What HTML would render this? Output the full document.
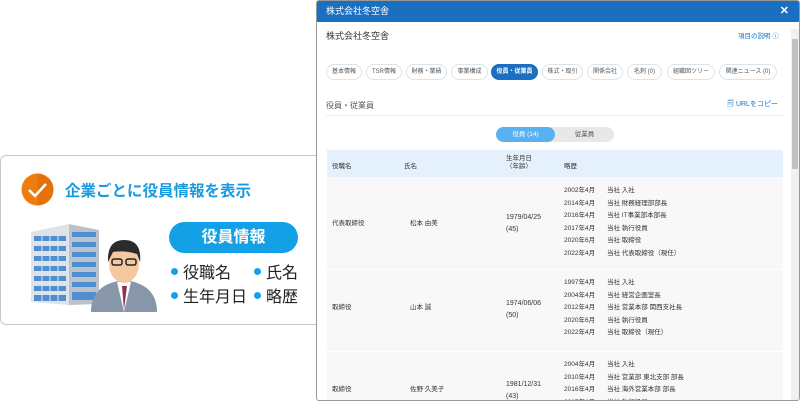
<!DOCTYPE html>
<html><head><meta charset="utf-8"><style>
*{margin:0;padding:0;box-sizing:border-box}
body{width:800px;height:403px;background:#fff;position:relative;overflow:hidden;font-family:"Liberation Sans","Noto Sans CJK JP",sans-serif;color:#333}
.card{position:absolute;left:0;top:155px;width:330px;height:170px;border:1px solid #c8c8c8;border-radius:6px;background:#fff}
.abs{position:absolute}
.modal{position:absolute;left:316px;top:0;width:484px;height:401px;border:1px solid #999;border-radius:3px;background:#fff;overflow:hidden}
.hd{height:21px;background:#1a6fc1;color:#fff;font-size:9px;line-height:21px;padding-left:9px}
.tab{position:absolute;top:63px;height:16px;border:1px solid #d8e4ee;border-radius:8px;font-size:6px;line-height:14px;text-align:center;color:#555}
.t{position:absolute;font-size:6.5px;color:#333;white-space:nowrap}
.d{display:inline-block;width:7px;height:7px;border-radius:50%;background:#14a0e6;margin-right:5px;vertical-align:middle;position:relative;top:-2px}
</style></head><body>
<div class="card">
 <svg class="abs" style="left:20px;top:17px" width="33" height="33" viewBox="0 0 33 33"><circle cx="16.5" cy="16.5" r="16" fill="#ee7d10"/><path d="M16.5 0.5A16 16 0 0 1 16.5 32.5Z" fill="#e06a05" opacity=".6"/><path d="M8 17l6 6 11-12" stroke="#fff" stroke-width="2.5" fill="none"/></svg>
 <div class="abs" style="left:64px;top:23px;font-size:15.5px;font-weight:bold;color:#1a9be0;white-space:nowrap">企業ごとに役員情報を表示</div>
 <svg class="abs" style="left:28px;top:66px" width="130" height="90" viewBox="0 0 130 90">
  <polygon points="2,10 40,2 40,83 2,80" fill="#dfe3e8"/><polygon points="40,2 70,8 70,82 40,83" fill="#b9c1cb"/>
  <g fill="#4d8fd0">
   <rect x="5" y="14" width="32" height="5"/><rect x="5" y="24" width="32" height="5"/><rect x="5" y="34" width="32" height="5"/><rect x="5" y="44" width="32" height="5"/><rect x="5" y="54" width="32" height="5"/><rect x="5" y="64" width="32" height="5"/><rect x="5" y="73" width="32" height="6"/>
   <rect x="43" y="10" width="24" height="5"/><rect x="43" y="20" width="24" height="5"/><rect x="43" y="30" width="24" height="5"/><rect x="43" y="40" width="24" height="5"/><rect x="43" y="50" width="24" height="5"/><rect x="43" y="60" width="24" height="5"/><rect x="43" y="70" width="24" height="8"/>
  </g>
  <g stroke="#dfe3e8" stroke-width="1"><path d="M13 10V80M21 8V80M29 6V82"/></g>
  <path d="M62 90 Q62 62 95 58 Q128 62 128 90Z" fill="#8796a8"/>
  <path d="M88 60 L95 90 L102 60Z" fill="#fff"/><path d="M93 64 L95 88 L98 64Z" fill="#8a3550"/>
  <ellipse cx="95" cy="42" rx="15" ry="19" fill="#f4c9a0"/>
  <path d="M79 40 Q78 18 95 18 Q113 18 111 40 L108 32 Q96 28 84 30Z" fill="#2b2b2b"/>
  <rect x="83" y="37" width="10" height="6" rx="2" fill="none" stroke="#222" stroke-width="1.5"/><rect x="97" y="37" width="10" height="6" rx="2" fill="none" stroke="#222" stroke-width="1.5"/>
 </svg>
 <div class="abs" style="left:168px;top:66px;width:129px;height:31px;border-radius:16px;background:#14a0e6;color:#fff;font-size:16px;font-weight:bold;text-align:center;line-height:31px">役員情報</div>
 <div class="abs" style="left:170px;top:106px;font-size:16px;line-height:24px;color:#222;white-space:nowrap"><span class="d"></span>役職名<br><span class="d"></span>生年月日</div>
 <div class="abs" style="left:253px;top:106px;font-size:16px;line-height:24px;color:#222;white-space:nowrap"><span class="d"></span>氏名<br><span class="d"></span>略歴</div>
</div>
<div class="modal">
 <div class="hd">株式会社冬空舎<span style="position:absolute;right:10px;top:0;font-weight:bold;font-size:11px">✕</span></div>
 <div class="abs" style="left:9px;top:28px;font-size:9px;color:#333">株式会社冬空舎</div>
 <div class="abs" style="left:421px;top:29px;font-size:6.5px;color:#1a6fc1">項目の説明 ⓘ</div>
 <div class="abs" style="right:0;top:28px;width:8px;height:373px;background:#f0f0f0"><div style="margin:10px 1px 0;height:130px;background:#c1c1c1"></div></div>
 <div class="tab" style="left:9px;width:36px">基本情報</div>
 <div class="tab" style="left:49px;width:36px">TSR情報</div>
 <div class="tab" style="left:89px;width:41px">財務・業績</div>
 <div class="tab" style="left:134px;width:37px">事業構成</div>
 <div class="tab" style="left:174px;width:47px;background:#1a6fc1;color:#fff;border-color:#1a6fc1;font-weight:bold">役員・従業員</div>
 <div class="tab" style="left:225px;width:41px">株式・取引</div>
 <div class="tab" style="left:270px;width:36px">関係会社</div>
 <div class="tab" style="left:310px;width:35px">名刺 (0)</div>
 <div class="tab" style="left:350px;width:48px">組織図ツリー</div>
 <div class="tab" style="left:402px;width:58px">関連ニュース (0)</div>
 <div class="abs" style="left:9px;top:99px;font-size:8px;color:#555">役員・従業員</div>
 <div class="abs" style="left:410px;top:98px;font-size:7px;color:#1a6fc1">🗐 URLをコピー</div>
 <div class="abs" style="left:9px;top:114px;width:458px;border-top:1px solid #eee"></div>
 <div class="abs" style="left:179px;top:126px;width:118px;height:15px;border-radius:8px;background:#e8e8e8"></div>
 <div class="abs" style="left:179px;top:126px;width:59px;height:15px;border-radius:8px;background:#59b1f2;color:#fff;font-size:6.5px;line-height:15px;text-align:center">役員 (14)</div>
 <div class="abs" style="left:238px;top:126px;width:59px;font-size:6.5px;line-height:15px;text-align:center;color:#555">従業員</div>
 <div class="abs" style="left:10px;top:149px;width:456px;height:27px;background:#e4f1fc"></div>
 <div class="abs" style="left:10px;top:176px;width:456px;height:225px;background:#f8f8f8"></div>
 <div class="abs" style="left:10px;top:268px;width:456px;border-top:1px solid #fff"></div>
 <div class="abs" style="left:10px;top:350px;width:456px;border-top:1px solid #fff"></div>
 <div class="t" style="left:15px;top:159px">役職名</div><div class="t" style="left:87px;top:159px">氏名</div>
 <div class="t" style="left:189px;top:154px;text-align:center;line-height:8px">生年月日<br>（年齢）</div><div class="t" style="left:247px;top:159px">略歴</div>
 <div class="t" style="left:15px;top:216px">代表取締役</div><div class="t" style="left:93px;top:216px">松本 由美</div>
 <div class="t" style="left:189px;top:211px;line-height:12px;font-size:7px">1979/04/25<br>(45)</div>
 <div class="t" style="left:247px;top:184px;line-height:12.5px">2002年4月<br>2014年4月<br>2016年4月<br>2017年4月<br>2020年6月<br>2022年4月</div>
 <div class="t" style="left:290px;top:184px;line-height:12.5px">当社 入社<br>当社 財務経理部部長<br>当社 IT事業部本部長<br>当社 執行役員<br>当社 取締役<br>当社 代表取締役（現任）</div>
 <div class="t" style="left:15px;top:300px">取締役</div><div class="t" style="left:93px;top:300px">山本 誠</div>
 <div class="t" style="left:189px;top:297px;line-height:12px;font-size:7px">1974/06/06<br>(50)</div>
 <div class="t" style="left:247px;top:276px;line-height:12.5px">1997年4月<br>2004年4月<br>2012年4月<br>2020年6月<br>2022年4月</div>
 <div class="t" style="left:290px;top:276px;line-height:12.5px">当社 入社<br>当社 経営企画室長<br>当社 営業本部 関西支社長<br>当社 執行役員<br>当社 取締役（現任）</div>
 <div class="t" style="left:15px;top:382px">取締役</div><div class="t" style="left:93px;top:382px">佐野 久美子</div>
 <div class="t" style="left:189px;top:378px;line-height:12px;font-size:7px">1981/12/31<br>(43)</div>
 <div class="t" style="left:247px;top:358px;line-height:12.5px">2004年4月<br>2010年4月<br>2016年4月<br>2017年4月</div>
 <div class="t" style="left:290px;top:358px;line-height:12.5px">当社 入社<br>当社 営業部 東北支部 部長<br>当社 海外営業本部 部長<br>当社 執行役員</div>
</div>
</body></html>
